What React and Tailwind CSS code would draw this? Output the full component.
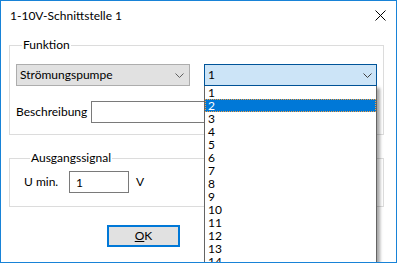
import React from "react";

const items = ["1", "2", "3", "4", "5", "6", "7", "8", "9", "10", "11", "12", "13", "14", "15"];

const Chevron = ({ color = "#606060" }) => (
  <svg width="9" height="5" viewBox="0 0 9 5" fill="none">
    <path d="M0.5 0.5 L4.5 4.5 L8.5 0.5" stroke={color} strokeWidth="1" />
  </svg>
);

const App = () => {
  return (
    <div
      className="relative w-[397px] h-[263px] overflow-hidden border border-[#1883d7] bg-white text-[12px] text-black"
      style={{ fontFamily: '"Segoe UI", Lato, "Noto Sans", sans-serif' }}
    >
      {/* title bar */}
      <div className="flex h-[29px] items-center justify-between pl-[9px] pr-[10px]">
        <span className="leading-none">1-10V-Schnittstelle 1</span>
        <svg width="11" height="11" viewBox="0 0 11 11">
          <path d="M0.5 0.5 L10.5 10.5 M10.5 0.5 L0.5 10.5" stroke="#000" strokeWidth="1" />
        </svg>
      </div>

      {/* Funktion */}
      <fieldset className="ml-[8px] mt-[7px] w-[375px] border border-[#dcdcdc] pl-[6px] pb-[11px]">
        <legend className="ml-[6px] px-[1px] leading-[16px]">Funktion</legend>

        <div className="mt-[11px] flex gap-[14px]">
          <div className="flex h-[22px] w-[174px] items-center justify-between border border-[#adadad] bg-[#e1e1e1] pl-[3px] pr-[5px]">
            <span>Strömungspumpe</span>
            <Chevron />
          </div>
          <div className="flex h-[22px] w-[173px] items-center justify-between border border-[#005499] bg-[#cce4f7] pl-[3px] pr-[4px]">
            <span>1</span>
            <Chevron color="#404040" />
          </div>
        </div>

        <div className="mt-[15px] flex items-center">
          <span className="w-[75px]">Beschreibung</span>
          <div className="h-[22px] w-[286px] border border-[#7a7a7a] bg-white" />
        </div>
      </fieldset>

      {/* Ausgangssignal */}
      <fieldset className="ml-[8px] mt-[15px] w-[375px] border border-[#dcdcdc] pl-[14px] pb-[13px]">
        <legend className="ml-[6px] px-[1px] leading-[16px]">Ausgangssignal</legend>

        <div className="mt-[5px] flex items-center">
          <span className="w-[45px]">U min.</span>
          <div className="flex h-[22px] w-[60px] items-start border border-[#7a7a7a] bg-white pl-[6px] pt-[2px]">
            1
          </div>
          <span className="ml-[7px]">V</span>
        </div>
      </fieldset>

      {/* OK */}
      <div className="mt-[18px] ml-[106px]">
        <button className="flex h-[22px] w-[73px] items-center justify-center border-2 border-[#0078d7] bg-[#e1e1e1]">
          <span>
            <span className="underline">O</span>K
          </span>
        </button>
      </div>

      {/* dropdown list */}
      <div className="absolute left-[203px] top-[85px] w-[173px] border-x border-[#646464] bg-white shadow-[3px_2px_3px_rgba(0,0,0,0.35)]">
        {items.map((item) => (
          <div
            key={item}
            className={
              item === "2"
                ? "h-[13px] border border-dotted border-[#f5a040] bg-[#0078d7] pl-[2px] leading-[11px] text-white"
                : "h-[13px] pl-[3px] leading-[13px]"
            }
          >
            {item}
          </div>
        ))}
      </div>
    </div>
  );
};

export default App;
